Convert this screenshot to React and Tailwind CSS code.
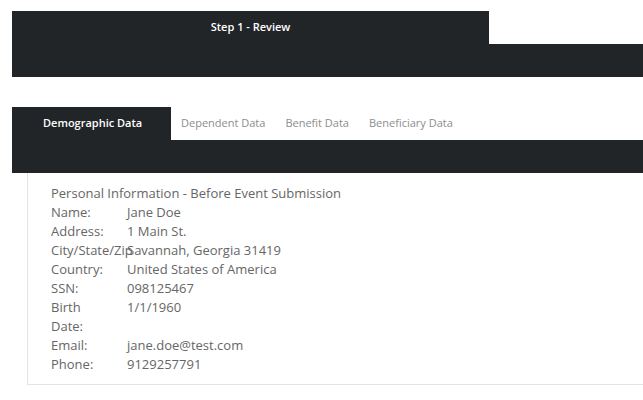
// Review step: dark step header, tab strip, personal info card.
const DARK = 'bg-[#222527]';

const info = [
  ['Name:', 'Jane Doe'],
  ['Address:', '1 Main St.'],
  ['City/State/Zip', 'Savannah, Georgia 31419'],
  ['Country:', 'United States of America'],
  ['SSN:', '098125467'],
  ['Birth Date:', '1/1/1960'],
  ['Email:', 'jane.doe@test.com'],
  ['Phone:', '9129257791'],
];

const tabs = ['Dependent Data', 'Benefit Data', 'Beneficiary Data'];

export default function App() {
  return (
    <div className="h-[400px] w-[643px] overflow-hidden bg-white pl-[12px] pt-[11px] font-['Open_Sans',sans-serif]">
      {/* step header */}
      <div className="flex h-[33px]">
        <div className={`${DARK} flex w-[477px] items-center justify-center text-[11px] font-semibold text-white`}>
          Step 1 - Review
        </div>
        <div className="flex-1" />
      </div>
      <div className={`${DARK} h-[33px]`} />

      {/* tabs */}
      <div className="mt-[30px] flex h-[33px] items-center text-[11px]">
        <div className={`${DARK} flex h-full w-[159px] items-center pl-[31px] font-semibold text-white`}>
          Demographic Data
        </div>
        {tabs.map((t) => (
          <div key={t} className="px-[10px] text-[#8d8d8d] first:pl-[9px]">{t}</div>
        ))}
      </div>
      <div className={`${DARK} h-[33px]`} />

      {/* card — runs off the right edge, so no right border */}
      <div className="ml-[15px] border-b border-l border-[#e3e3e3] pb-[10px] pl-[23px] pt-[11px] text-[13px] leading-[19px] text-[#666]">
        <div>Personal Information - Before Event Submission</div>
        {info.map(([k, v]) => (
          <div key={k} className="flex">
            <div className="w-[62px] shrink-0">{k}</div>
            <div className="ml-[14px]">{v}</div>
          </div>
        ))}
      </div>
    </div>
  );
}
